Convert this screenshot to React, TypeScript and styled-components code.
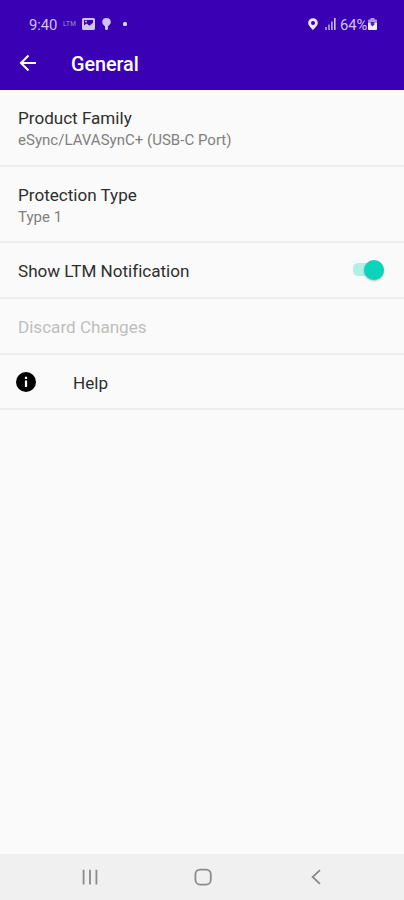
import React from 'react';
import styled, { createGlobalStyle } from 'styled-components';

const GlobalStyle = createGlobalStyle`
  * { box-sizing: border-box; }
  body { margin: 0; background: #fafafa; font-family: Roboto, sans-serif; }
`;

const Screen = styled.div`
  width: 404px;
  height: 900px;
  display: flex;
  flex-direction: column;
  overflow: hidden;
  background: #fafafa;
`;

const Header = styled.header`
  height: 90px;
  flex: none;
  background: #3a00b4;
  color: #fff;
`;

const StatusBar = styled.div`
  height: 37px;
  padding: 11px 27px 0 29px;
  display: flex;
  justify-content: space-between;
  color: #d2c1f3;
`;

const StatusGroup = styled.div`
  height: 26px;
  display: flex;
  align-items: center;

  svg { display: block; flex: none; }
`;

const StatusText = styled.span<{ $width: number }>`
  width: ${(p) => p.$width}px;
  padding-top: 1px;
  font-size: 14.8px;
  line-height: 26px;
  letter-spacing: -0.1px;
  white-space: nowrap;
`;

const LtmBadge = styled.span`
  width: 19px;
  margin-left: 5px;
  font-size: 6.5px;
  font-weight: 500;
  letter-spacing: 0.3px;
  color: #8c74cf;
`;

const Gap = styled.span<{ $size: number }>`
  width: ${(p) => p.$size}px;
  flex: none;
`;

const Dot = styled.span`
  width: 4px;
  height: 4px;
  border-radius: 1.5px;
  background: #e1d5f8;
`;

const AppBar = styled.div`
  height: 53px;
  padding-left: 18px;
  display: flex;
  align-items: center;
`;

const BackButton = styled.button`
  width: 20px;
  height: 20px;
  padding: 0;
  border: 0;
  background: none;
  color: #fff;

  svg { display: block; margin-top: -1px; }
`;

const Title = styled.h1`
  margin: 2px 0 0 33px;
  font-size: 19.8px;
  font-weight: 500;
  line-height: 24px;
  letter-spacing: -0.05px;
`;

const Settings = styled.main`
  flex: 1;
`;

const Row = styled.section<{ $height: number }>`
  height: ${(p) => p.$height}px;
  padding: 2px 20px 0 18px;
  display: flex;
  align-items: center;
  border-bottom: 2px solid #ededed;
`;

const Labels = styled.div`
  flex: 1;
`;

const Label = styled.div<{ $disabled?: boolean }>`
  font-size: 17.1px;
  line-height: 22px;
  letter-spacing: -0.01px;
  color: ${(p) => (p.$disabled ? '#bebebe' : '#2e2e2e')};
`;

const Value = styled.div`
  font-size: 15px;
  line-height: 20px;
  letter-spacing: 0.02px;
  color: #808080;
  margin-top: 1px;
`;

const Switch = styled.button`
  width: 31px;
  height: 20px;
  margin-top: -3px;
  padding: 0;
  border: 0;
  background: none;
  display: flex;
  align-items: center;
  justify-content: flex-end;
`;

const Track = styled.span`
  width: 20px;
  height: 13px;
  margin-right: -9px;
  border-radius: 5px;
  background: #b0f0e7;
`;

const Thumb = styled.span`
  width: 20px;
  height: 20px;
  border-radius: 50%;
  background: #0bd4bd;
  box-shadow: 0 1px 2px rgba(0, 0, 0, 0.28);
`;

const InfoSlot = styled.span`
  width: 57px;
  margin: -2px 0 0 -2px;
  flex: none;

  svg { display: block; }
`;

const NavBar = styled.nav`
  height: 46px;
  flex: none;
  padding: 0 79px 0 81px;
  display: flex;
  align-items: center;
  justify-content: space-between;
  background: #f0f0f0;
`;

const NavButton = styled.button`
  width: 18px;
  height: 18px;
  padding: 0;
  border: 0;
  background: none;
  color: #8a8a8a;

  svg { display: block; }
`;

const ImageIcon = () => (
  <svg width="13" height="12" viewBox="0 0 13 12">
    <path fill="currentColor" fillRule="evenodd" d="M1.5 0h10A1.5 1.5 0 0 1 13 1.5v9a1.5 1.5 0 0 1-1.5 1.5h-10A1.5 1.5 0 0 1 0 10.5v-9A1.5 1.5 0 0 1 1.5 0ZM2 2v5.6l2.5-2 3 2.2L11 4.7V2H2Z" />
    <circle cx="4" cy="3.5" r="1" fill="currentColor" />
  </svg>
);

const BulbIcon = () => (
  <svg width="9" height="12" viewBox="0 0 9 12" fill="currentColor">
    <path d="M4.5 0A4.3 4.3 0 0 0 .2 4.2c0 2 1.8 2.9 2.8 4.3V11l.8 1h1.4l.8-1V8.5C7 7.1 8.8 6.2 8.8 4.2A4.3 4.3 0 0 0 4.5 0Z" />
  </svg>
);

const PinIcon = () => (
  <svg width="10" height="13" viewBox="0 0 10 13">
    <path fill="#eee6fc" fillRule="evenodd" d="M5 .2a4.7 4.7 0 0 1 4.8 4.7C9.8 7.8 6.8 9.5 5 12.2 3.2 9.5.2 7.8.2 4.9A4.7 4.7 0 0 1 5 .2Zm0 2.7a2 2 0 1 0 0 4 2 2 0 0 0 0-4Z" />
  </svg>
);

const SignalIcon = () => (
  <svg width="11" height="12" viewBox="0 0 11 12" fill="currentColor">
    <path opacity=".65" d="M0 9h2v3H0zM3 6.5h2V12H3z" />
    <path opacity=".8" d="M6 3.5h1.8V12H6z" />
    <path d="M9 0h1.6v12H9z" />
  </svg>
);

const BatteryIcon = () => (
  <svg width="9" height="12" viewBox="0 0 9 12">
    <path fill="#a995dd" d="M2.5 0h4v1.5H8A1 1 0 0 1 9 2.5V6H0V2.5a1 1 0 0 1 1-1h1.5Z" />
    <path fill="#f0e9fc" d="M0 5h9v6a1 1 0 0 1-1 1H1a1 1 0 0 1-1-1Z" />
    <path fill="#4c2c9e" d="M2.7 4h3.6v2.6L4.5 8.6 2.7 6.6Z" />
  </svg>
);

const BackArrowIcon = () => (
  <svg width="20" height="20" viewBox="0 0 20 20" fill="none" stroke="currentColor" strokeWidth="2">
    <path d="M18 10H3.5M10.5 2.5 3 10l7.5 7.5" />
  </svg>
);

const InfoIcon = () => (
  <svg width="20" height="20" viewBox="0 0 20 20">
    <circle cx="10" cy="10" r="10" fill="#000" />
    <path fill="#fff" d="M8.9 4.8h2.2v2.1H8.9zM8.9 8.4h2.2v6.7H8.9z" />
  </svg>
);

const RecentsIcon = () => (
  <svg width="18" height="18" viewBox="0 0 18 18" stroke="currentColor" strokeWidth="1.8">
    <path d="M2.6 1.8v14.6M9 1.8v14.6M15.4 1.8v14.6" />
  </svg>
);

const HomeIcon = () => (
  <svg width="18" height="18" viewBox="0 0 18 18" fill="none" stroke="currentColor" strokeWidth="1.8">
    <rect x="1.4" y="1.6" width="15.4" height="15" rx="4.8" />
  </svg>
);

const NavBackIcon = () => (
  <svg width="18" height="18" viewBox="0 0 18 18" fill="none" stroke="currentColor" strokeWidth="1.8">
    <path d="M13 2.2 5.6 9l7.4 6.8" />
  </svg>
);

export default function App() {
  return (
    <>
      <GlobalStyle />
      <Screen>
        <Header>
          <StatusBar>
            <StatusGroup>
              <StatusText $width={29}>9:40</StatusText>
              <LtmBadge>LTM</LtmBadge>
              <ImageIcon />
              <Gap $size={7} />
              <BulbIcon />
              <Gap $size={12} />
              <Dot />
            </StatusGroup>
            <StatusGroup>
              <PinIcon />
              <Gap $size={7} />
              <SignalIcon />
              <Gap $size={4} />
              <StatusText $width={28}>64%</StatusText>
              <BatteryIcon />
            </StatusGroup>
          </StatusBar>
          <AppBar>
            <BackButton aria-label="Back"><BackArrowIcon /></BackButton>
            <Title>General</Title>
          </AppBar>
        </Header>
        <Settings>
          <Row $height={77}>
            <Labels>
              <Label>Product Family</Label>
              <Value>eSync/LAVASynC+ (USB-C Port)</Value>
            </Labels>
          </Row>
          <Row $height={76}>
            <Labels>
              <Label>Protection Type</Label>
              <Value>Type 1</Value>
            </Labels>
          </Row>
          <Row $height={56}>
            <Labels><Label>Show LTM Notification</Label></Labels>
            <Switch role="switch" aria-checked="true" aria-label="Show LTM Notification">
              <Track />
              <Thumb />
            </Switch>
          </Row>
          <Row $height={56}>
            <Labels><Label $disabled>Discard Changes</Label></Labels>
          </Row>
          <Row $height={55}>
            <InfoSlot><InfoIcon /></InfoSlot>
            <Label>Help</Label>
          </Row>
        </Settings>
        <NavBar>
          <NavButton aria-label="Recents"><RecentsIcon /></NavButton>
          <NavButton aria-label="Home"><HomeIcon /></NavButton>
          <NavButton aria-label="Back"><NavBackIcon /></NavButton>
        </NavBar>
      </Screen>
    </>
  );
}
